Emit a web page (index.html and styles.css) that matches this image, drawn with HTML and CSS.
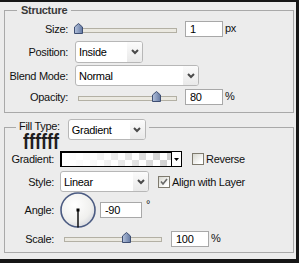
FILE: index.html
```html
<!DOCTYPE html>
<html>
<head>
  <title>Stroke</title>
  <link rel="stylesheet" href="styles.css">
</head>
<body>

  <div class="dialog">

    <fieldset class="group structure">
      <legend class="title">Structure</legend>

      <div class="row r-size">
        <span class="lbl">Size:</span>
        <div class="slider">
          <div class="track"></div>
          <svg class="thumb" style="left:-1px" width="9" height="11" viewBox="0 0 9 11">
            <defs>
              <linearGradient id="tg" x1="0" y1="0" x2="1" y2="0">
                <stop offset="0" stop-color="#b4c2dc"/>
                <stop offset="1" stop-color="#6479a2"/>
              </linearGradient>
            </defs>
            <path d="M0.5 10.5 V4 L4.5 0.5 L8.5 4 V10.5 Z" fill="url(#tg)" stroke="#3e4e72"/>
          </svg>
        </div>
        <input class="num" type="text" value="1">
        <span class="unit">px</span>
      </div>

      <div class="row r-pos">
        <span class="lbl">Position:</span>
        <div class="select sel-pos">
          <span class="sel-text">Inside</span>
          <span class="sel-arrow"><svg width="8" height="6" viewBox="0 0 8 6"><path d="M1 1 L4 4 L7 1" fill="none" stroke="#4a4a4a" stroke-width="2"/></svg></span>
        </div>
      </div>

      <div class="row r-blend">
        <span class="lbl">Blend Mode:</span>
        <div class="select sel-blend">
          <span class="sel-text">Normal</span>
          <span class="sel-arrow"><svg width="8" height="6" viewBox="0 0 8 6"><path d="M1 1 L4 4 L7 1" fill="none" stroke="#4a4a4a" stroke-width="2"/></svg></span>
        </div>
      </div>

      <div class="row r-opacity">
        <span class="lbl">Opacity:</span>
        <div class="slider">
          <div class="track"></div>
          <svg class="thumb" style="left:77px" width="9" height="11" viewBox="0 0 9 11">
            <path d="M0.5 10.5 V4 L4.5 0.5 L8.5 4 V10.5 Z" fill="url(#tg)" stroke="#3e4e72"/>
          </svg>
        </div>
        <input class="num" type="text" value="80">
        <span class="unit">%</span>
      </div>
    </fieldset>

    <fieldset class="group fill">
      <legend class="fill-legend">
        <span class="legend-lbl">Fill Type:</span>
        <div class="select sel-fill">
          <span class="sel-text">Gradient</span>
          <span class="sel-arrow"><svg width="8" height="6" viewBox="0 0 8 6"><path d="M1 1 L4 4 L7 1" fill="none" stroke="#4a4a4a" stroke-width="2"/></svg></span>
        </div>
      </legend>

      <div class="glitch">ffffff</div>

      <div class="row r-grad">
        <span class="lbl">Gradient:</span>
        <div class="gradbox">
          <div class="gradfill"></div>
          <div class="gradarrow"><svg width="5" height="3" viewBox="0 0 5 3"><path d="M0 0 H5 L2.5 3 Z" fill="#000"/></svg></div>
        </div>
        <span class="check c-reverse"></span>
        <span class="check-lbl">Reverse</span>
      </div>

      <div class="row r-style">
        <span class="lbl">Style:</span>
        <div class="select sel-style">
          <span class="sel-text">Linear</span>
          <span class="sel-arrow"><svg width="8" height="6" viewBox="0 0 8 6"><path d="M1 1 L4 4 L7 1" fill="none" stroke="#4a4a4a" stroke-width="2"/></svg></span>
        </div>
        <span class="check c-align">
          <svg width="10" height="10" viewBox="0 0 10 10"><path d="M2 4.5 L4 7 L8 2" fill="none" stroke="#6a6a6a" stroke-width="1.6"/></svg>
        </span>
        <span class="check-lbl">Align with Layer</span>
      </div>

      <div class="row r-angle">
        <span class="lbl">Angle:</span>
        <svg class="dial" width="36" height="36" viewBox="0 0 36 36">
          <defs>
            <radialGradient id="dg" cx="0.4" cy="0.35" r="0.7">
              <stop offset="0" stop-color="#ffffff"/>
              <stop offset="0.7" stop-color="#f0f0ee"/>
              <stop offset="1" stop-color="#d6d8de"/>
            </radialGradient>
          </defs>
          <circle cx="18" cy="18" r="17" fill="url(#dg)" stroke="#4b5b82" stroke-width="1.6"/>
          <line x1="18" y1="18" x2="18" y2="35.5" stroke="#000" stroke-width="1.4"/>
          <rect x="16.5" y="16.5" width="3" height="3" fill="#000"/>
        </svg>
        <input class="num n-angle" type="text" value="-90">
        <span class="deg">°</span>
      </div>

      <div class="row r-scale">
        <span class="lbl">Scale:</span>
        <div class="slider s-scale">
          <div class="track"></div>
          <svg class="thumb" style="left:62px" width="9" height="11" viewBox="0 0 9 11">
            <path d="M0.5 10.5 V4 L4.5 0.5 L8.5 4 V10.5 Z" fill="url(#tg)" stroke="#3e4e72"/>
          </svg>
        </div>
        <input class="num" type="text" value="100">
        <span class="unit">%</span>
      </div>
    </fieldset>

  </div>

</body>
</html>
```

FILE: styles.css
```css
body {
  margin: 0;
  font-family: 'Liberation Sans', Tahoma, sans-serif;
  font-size: 11px;
  letter-spacing: -0.3px;
  color: #111;
}

.dialog {
  width: 299px;
  height: 263px;
  box-sizing: border-box;
  background: #ececec;
  border-top: 2px solid #161616;
  border-right: 3px solid #161616;
  border-bottom: 4px solid #161616;
  padding-left: 4px;
  overflow: hidden;
}

.group {
  width: 290px;
  box-sizing: border-box;
  min-width: 0;
  margin: 0;
  padding: 0;
  border: 1px solid #a9a9a9;
}

.structure {
  margin-top: 2px;
  padding-bottom: 7px;
}

.title {
  margin-left: 12px;
  padding: 0 4px;
  height: 13px;
  line-height: 13px;
  font-weight: bold;
  color: #3a3a3a;
}

.fill {
  margin-top: 7px;
  padding-bottom: 5px;
}

.fill-legend {
  display: flex;
  align-items: flex-start;
  margin-left: 11px;
  padding: 0 3px;
  height: 15px;
}

.legend-lbl {
  line-height: 13px;
  margin-right: 8px;
}

.row {
  display: flex;
  align-items: center;
}

.lbl {
  flex: none;
  width: 63px;
  margin-right: 7px;
  text-align: right;
}

.fill .lbl {
  width: 49px;
  margin-right: 6px;
}

.r-size {
  height: 16px;
  margin-top: 4px;
}

.r-pos {
  height: 22px;
  margin-top: 4px;
}

.r-blend {
  height: 21px;
  margin-top: 2px;
}

.r-opacity {
  height: 16px;
  margin-top: 3px;
}

/* sliders */
.slider {
  position: relative;
  flex: none;
  width: 107px;
  height: 16px;
  margin-right: 3px;
}

.track {
  position: absolute;
  left: 3px;
  top: 7px;
  width: 99px;
  height: 5px;
  box-sizing: border-box;
  background: #ebe9e1;
  border: 1px solid #b3b0a4;
}

.thumb {
  position: absolute;
  top: 2px;
}

.s-scale {
  width: 106px;
  margin-right: 5px;
}

.s-scale .track {
  left: 4px;
  top: 6px;
  width: 98px;
}

.s-scale .thumb {
  top: 1px;
}

/* text fields */
.num {
  flex: none;
  width: 38px;
  height: 16px;
  box-sizing: border-box;
  margin: 0;
  padding: 0 4px;
  border: 1px solid #a8a8a8;
  background: #fff;
  font-family: 'Liberation Sans', Tahoma, sans-serif;
  font-size: 11px;
  letter-spacing: -0.3px;
  color: #000;
  outline: none;
}

.unit {
  margin-left: 2px;
  margin-top: -3px;
}

/* selects */
.select {
  flex: none;
  display: flex;
  align-items: center;
  box-sizing: border-box;
  background: #fff;
  border: 1px solid #b7b7b7;
  border-radius: 3px;
  overflow: hidden;
}

.sel-text {
  flex: 1;
  padding-left: 3px;
  color: #000;
}

.sel-arrow {
  display: flex;
  align-items: center;
  justify-content: center;
  width: 15px;
  align-self: stretch;
  background: linear-gradient(#fbfbfb, #e9e9e9);
}

.sel-pos {
  width: 68px;
  height: 22px;
}

.sel-blend {
  width: 124px;
  height: 21px;
}

.sel-fill {
  width: 78px;
  height: 21px;
  margin-top: -1px;
}

.sel-style {
  width: 89px;
  height: 21px;
}

/* fill type block */
.glitch {
  height: 13px;
  margin: 0 0 0 18px;
  font-family: 'Liberation Sans', sans-serif;
  font-weight: bold;
  font-size: 18px;
  line-height: 13px;
  letter-spacing: 0;
  color: #1e1e1e;
  transform: scaleY(1.2);
  transform-origin: 0 0;
}

.r-grad {
  height: 16px;
  margin-top: 3px;
}

.gradbox {
  flex: none;
  display: flex;
  width: 122px;
  height: 16px;
  box-sizing: border-box;
  border: 1px solid #000;
  box-shadow: inset 1px 1px 0 #000;
}

.gradfill {
  flex: 1;
  margin: 1px 0 0 1px;
  background:
    linear-gradient(to right, #fff 0%, rgba(255,255,255,0.85) 30%, rgba(255,255,255,0) 100%),
    repeating-conic-gradient(#d0d0d0 0 25%, #fff 0 50%) 0 0 / 14px 14px;
}

.gradarrow {
  display: flex;
  align-items: center;
  justify-content: center;
  width: 9px;
  border-left: 1px solid #000;
  background: #fff;
}

.check {
  flex: none;
  display: flex;
  align-items: center;
  justify-content: center;
  width: 12px;
  height: 12px;
  box-sizing: border-box;
  border: 1px solid #7e7a6e;
  background: linear-gradient(135deg, #d8d8d0, #fff 80%);
}

.c-reverse {
  margin-left: 10px;
}

.c-align {
  margin-left: 9px;
}

.check-lbl {
  margin-left: 2px;
}

.r-style {
  height: 21px;
  margin-top: 4px;
}

.r-angle {
  height: 36px;
}

.dial {
  flex: none;
}

.n-angle {
  width: 42px;
  margin-left: 4px;
}

.deg {
  align-self: flex-start;
  margin: 7px 0 0 4px;
  line-height: 11px;
}

.r-scale {
  height: 16px;
  margin-top: 3px;
}
```
